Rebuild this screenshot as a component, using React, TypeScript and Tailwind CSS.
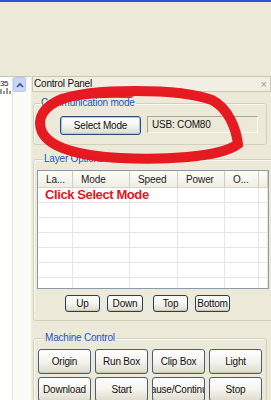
import React from "react";

const F = "font-['Liberation_Sans',Arial,sans-serif]";

function XpButton({
  children,
  className = "",
}: {
  children: React.ReactNode;
  className?: string;
}) {
  return (
    <div
      className={`flex items-center justify-center overflow-hidden whitespace-nowrap rounded-[3px] border border-[#1f3f66] bg-gradient-to-b from-[#ffffff] via-[#f4f3ee] to-[#dedbcb] text-[10px] leading-none tracking-[-0.2px] text-[#111] shadow-[inset_0_-1px_0_#c9c5b0] ${className}`}
    >
      {children}
    </div>
  );
}

function Legend({ children }: { children: React.ReactNode }) {
  return (
    <legend className="ml-[6px] px-[1px] text-[10px] leading-[10px] tracking-[-0.2px] text-[#1d4fc4]">
      {children}
    </legend>
  );
}

const cols = ["La...", "Mode", "Speed", "Power", "O...", ""];

export default function App() {
  return (
    <div
      className={`relative h-[400px] w-[271px] overflow-hidden bg-[#ece9d8] ${F}`}
    >
      <div className="h-[2px] bg-[#2456d6]" />
      <div className="flex pt-[74px]">
        {/* left strip */}
        <div className="flex h-[324px] w-[31px] border-t border-[#c8c6b8] bg-[#fbfbf8]">
          <div className="relative w-[12px] bg-white">
            <div className="pt-[3px] text-[8px] leading-[8px] tracking-[-0.5px] text-[#222]">
              35
            </div>
            <svg width="12" height="6">
              <path d="M1 6V1M4 6V3M7 6V0M10 6V3" stroke="#333" strokeWidth="1" />
            </svg>
          </div>
          <div className="w-[1px] bg-[#e4e2d8]" />
          <div className="w-[13px]">
            <div className="flex h-[15px] w-[13px] items-center justify-center rounded-[2px] border border-[#b9c9ef] bg-[#c6d6fb]">
              <svg width="8" height="6" viewBox="0 0 8 6">
                <path d="M1 5 L4 2 L7 5" stroke="#3b4f86" strokeWidth="1.6" fill="none" />
              </svg>
            </div>
          </div>
        </div>

        {/* panel */}
        <div className="flex w-[240px] flex-col">
          <div className="ml-[1px] flex h-[16px] items-center justify-between border border-[#c9c6b4] bg-[#f1efe4] pl-[1px] pr-[3px]">
            <span className="text-[10px] leading-none tracking-[-0.2px] text-[#111]">
              Control Panel
            </span>
            <span className="text-[11px] leading-none text-[#9a9a94]">×</span>
          </div>

          {/* Communication mode */}
          <fieldset className="ml-[2px] mr-[4px] mt-[6px] rounded-[3px] border border-[#d2cfbd] pb-[9px] pt-[8px] shadow-[inset_1px_1px_0_#fbfaf5]">
            <Legend>Communication mode</Legend>
            <div className="flex items-start">
              <XpButton className="ml-[26px] h-[19px] w-[81px] border-[#2a4d7a] shadow-[inset_0_0_0_1px_#a9c4f4]">
                Select Mode
              </XpButton>
              <div className="ml-[6px] flex h-[17px] w-[111px] items-center border border-[#a7a597] border-b-[#f8f7f0] border-r-[#f8f7f0] pl-[4px] text-[10px] leading-none tracking-[-0.2px] text-[#111]">
                USB: COM80
              </div>
            </div>
          </fieldset>

          {/* Layer Options */}
          <fieldset className="ml-[2px] mr-[4px] mt-[9px] rounded-[3px] border border-[#d2cfbd] pb-[8px] pl-[3px] pr-[4px] pt-[6px] shadow-[inset_1px_1px_0_#fbfaf5]">
            <Legend>Layer Options</Legend>
            <div className="h-[119px] overflow-hidden border border-[#8e9aa8] bg-white">
              <div className="grid h-[17px] grid-cols-[35px_57px_48px_47px_34px_1fr] border-b border-[#d8d5c6] bg-gradient-to-b from-[#fdfdfb] to-[#efeee4]">
                {cols.map((c, i) => (
                  <div
                    key={i}
                    className="flex items-center border-r border-[#cfccbd] pl-[8px] pt-[1px] text-[10px] leading-none tracking-[-0.1px] text-[#222]"
                  >
                    {c}
                  </div>
                ))}
              </div>
              {[0, 1, 2, 3, 4, 5, 6].map((r) => (
                <div
                  key={r}
                  className="grid h-[15px] grid-cols-[35px_57px_48px_47px_34px_1fr] border-b border-[#e6e6e6]"
                >
                  {cols.map((_, i) => (
                    <div key={i} className="border-r border-[#e6e6e6]" />
                  ))}
                </div>
              ))}
            </div>
            <div className="mt-[6px] flex">
              <XpButton className="ml-[28px] h-[17px] w-[35px]">Up</XpButton>
              <XpButton className="ml-[7px] h-[17px] w-[36px]">Down</XpButton>
              <XpButton className="ml-[10px] h-[17px] w-[35px]">Top</XpButton>
              <XpButton className="ml-[7px] h-[17px] w-[35px]">Bottom</XpButton>
            </div>
          </fieldset>

          {/* Machine Control */}
          <fieldset className="ml-[2px] mr-[4px] mt-[12px] rounded-[3px] border border-[#d2cfbd] pl-[4px] pt-[6px] shadow-[inset_1px_1px_0_#fbfaf5]">
            <Legend>Machine Control</Legend>
            <div className="grid grid-cols-[53px_53px_53px_53px] gap-x-[4px] gap-y-[3px]">
              <XpButton className="h-[25px] border-[#4a5e78]">Origin</XpButton>
              <XpButton className="h-[25px] border-[#4a5e78]">Run Box</XpButton>
              <XpButton className="h-[25px] border-[#4a5e78]">Clip Box</XpButton>
              <XpButton className="h-[25px] border-[#4a5e78]">Light</XpButton>
              <XpButton className="h-[25px] border-[#4a5e78]">Download</XpButton>
              <XpButton className="h-[25px] border-[#4a5e78]">Start</XpButton>
              <XpButton className="h-[25px] border-[#4a5e78]">Pause/Continue</XpButton>
              <XpButton className="h-[25px] border-[#4a5e78]">Stop</XpButton>
            </div>
          </fieldset>
        </div>
      </div>

      {/* red annotation overlay */}
      <svg
        className="pointer-events-none absolute left-0 top-0"
        width="271"
        height="400"
        viewBox="0 0 271 400"
      >
        <path
          d="M60 100 C 90 88, 180 88, 212 100 C 228 108, 236 128, 238 144 C 220 158, 160 160, 120 158 C 80 156, 50 148, 42 132 C 36 118, 44 106, 62 99 C 80 93, 110 92, 130 93"
          stroke="#e5141c"
          strokeWidth="10"
          strokeLinecap="round"
          fill="none"
          opacity="0.97"
        />
      </svg>
      <div className="pointer-events-none absolute left-[45px] top-[188px] text-[13px] font-bold leading-none tracking-[-0.4px] text-[#e3161e]">
        Click Select Mode
      </div>
    </div>
  );
}
